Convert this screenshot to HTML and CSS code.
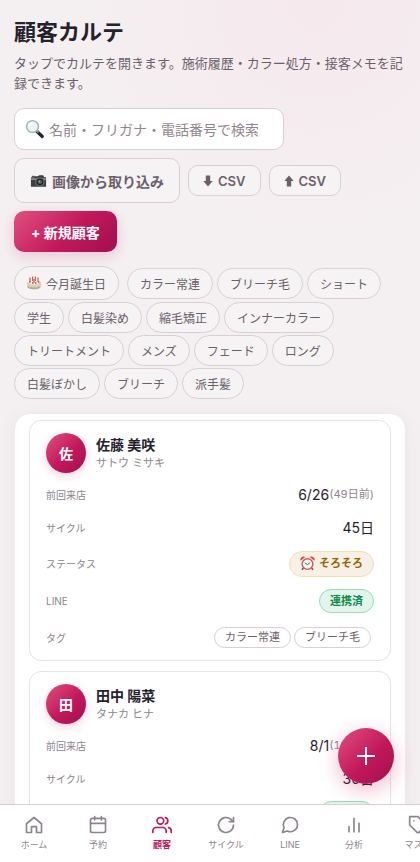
FILE: index.html
```html
<!DOCTYPE html>
<html lang="ja">
<head>
<meta charset="utf-8">
<meta name="viewport" content="width=device-width, initial-scale=1">
<title>顧客カルテ</title>
<link rel="stylesheet" href="styles.css">
</head>
<body>
<main class="page">
  <h1 class="title">顧客カルテ</h1>
  <p class="lead">タップでカルテを開きます。施術履歴・カラー処方・接客メモを記録できます。</p>

  <div class="toolbar">
    <label class="search">
      <svg class="search-icon" viewBox="0 0 20 20" aria-hidden="true">
        <path d="M12 12.500 17.300 17.500" stroke="#25252b" stroke-width="3.200" stroke-linecap="round"/>
        <path d="m11.500 11.500 2 2" stroke="#8b949c" stroke-width="2"/>
        <circle cx="7.500" cy="7.500" r="5.900" fill="#edf4f6" stroke="#a3adb4" stroke-width="1.400"/>
        <path d="M4 7a3.600 3.600 0 0 1 3-3" stroke="#fff" stroke-width="1.300" fill="none"/>
      </svg>
      <input class="search-input" type="text" aria-label="顧客検索" placeholder="名前・フリガナ・電話番号で検索">
    </label>
    <button class="btn btn-import" type="button">
      <svg class="camera" viewBox="0 0 18 14" aria-hidden="true">
        <path d="M1 3h3l1-1h3l2-1h4l1 2h2v10H1z" fill="#3c3e40"/>
        <path d="M1 4h16v2H1z" fill="#88898a"/>
        <path d="M2 1.500h3V3H2z" fill="#555"/>
        <circle cx="10.500" cy="8" r="4.300" fill="#222628" stroke="#7a7d7e"/>
        <circle cx="10.500" cy="8" r="2.200" fill="#4c6662"/>
        <circle cx="9.800" cy="7.200" r=".7" fill="#b4c8c4"/>
      </svg>
      <span>画像から取り込み</span>
    </button>
    <button class="btn btn-csv" type="button">
      <svg class="arrow" viewBox="0 0 10 12" aria-hidden="true"><path d="M2.800.5h4.400V6h2.500L5 11.500.3 6h2.500z" fill="currentColor"/></svg>
      <span>CSV</span>
    </button>
    <button class="btn btn-csv" type="button">
      <svg class="arrow" viewBox="0 0 10 12" aria-hidden="true"><path d="M2.800 11.500h4.400V6h2.500L5 .5.300 6h2.500z" fill="currentColor"/></svg>
      <span>CSV</span>
    </button>
    <button class="btn btn-primary" type="button">+ 新規顧客</button>
  </div>

  <div class="filters">
    <button class="chip chip-birthday" type="button">
      <svg class="cake" viewBox="0 0 14 14" aria-hidden="true">
        <path d="M.5 6v5c0 3 13 3 13 0V6z" fill="#b9a88c"/>
        <path d="M.5 5.500V9.500c1 2.500 12 2.500 13 0V5.500z" fill="#ddd0b8"/>
        <ellipse cx="7" cy="5.500" rx="6.500" ry="3" fill="#fbf3e4"/>
        <path d="M3 2v4M5.700 1v4M8.300 1v4M11 2v4M7 3v4" stroke="#b93b4c" stroke-width="1"/>
        <path d="M2 6h1.500M5 7h1.500M8 7h1.500M11 6h1.500" stroke="#d73d4e" stroke-width="1.500"/>
        <path d="M3 1v1M5.700 0v1M8.300 0v1M11 1v1" stroke="#eaa23b"/>
      </svg>
      <span>今月誕生日</span>
    </button>
    <button class="chip" type="button">カラー常連</button>
    <button class="chip" type="button">ブリーチ毛</button>
    <button class="chip" type="button">ショート</button>
    <button class="chip" type="button">学生</button>
    <button class="chip" type="button">白髪染め</button>
    <button class="chip" type="button">縮毛矯正</button>
    <button class="chip" type="button">インナーカラー</button>
    <button class="chip" type="button">トリートメント</button>
    <button class="chip" type="button">メンズ</button>
    <button class="chip" type="button">フェード</button>
    <button class="chip" type="button">ロング</button>
    <button class="chip" type="button">白髪ぼかし</button>
    <button class="chip" type="button">ブリーチ</button>
    <button class="chip" type="button">派手髪</button>
  </div>

  <section class="panel">
    <article class="card">
      <header class="person">
        <div class="avatar">佐</div>
        <div>
          <h2 class="name">佐藤 美咲</h2>
          <p class="kana">サトウ ミサキ</p>
        </div>
      </header>
      <dl class="facts">
        <div class="fact"><dt>前回来店</dt><dd>6/26<small>(49日前)</small></dd></div>
        <div class="fact"><dt>サイクル</dt><dd>45日</dd></div>
        <div class="fact"><dt>ステータス</dt><dd class="status"><span class="badge badge-soon">
          <svg class="clock" viewBox="0 0 14 14" aria-hidden="true">
            <path d="m3 11-1 2M11 11l1 2" stroke="#9a4a4a" stroke-width="1.500"/>
            <path d="M.5 4.500a3 3 0 0 1 4.500-3.500zM13.500 4.500A3 3 0 0 0 9 1z" fill="#e0434d"/>
            <circle cx="7" cy="7.500" r="5" fill="#faf8f5" stroke="#cc5962" stroke-width="1.300"/>
            <path d="m4.500 6.500 2.500 1.500L9.500 6" fill="none" stroke="#555" stroke-width=".9"/>
          </svg>そろそろ</span></dd></div>
        <div class="fact"><dt>LINE</dt><dd><span class="badge badge-linked">連携済</span></dd></div>
        <div class="fact"><dt>タグ</dt><dd class="tags"><span class="tag">カラー常連</span><span class="tag">ブリーチ毛</span></dd></div>
      </dl>
    </article>
    <article class="card">
      <header class="person">
        <div class="avatar">田</div>
        <div>
          <h2 class="name">田中 陽菜</h2>
          <p class="kana">タナカ ヒナ</p>
        </div>
      </header>
      <dl class="facts">
        <div class="fact"><dt>前回来店</dt><dd>8/1<small>(13日前)</small></dd></div>
        <div class="fact"><dt>サイクル</dt><dd>30日</dd></div>
        <div class="fact"><dt>LINE</dt><dd><span class="badge badge-linked">連携済</span></dd></div>
      </dl>
    </article>
  </section>
</main>

<button class="fab" type="button" aria-label="新規顧客を追加">
  <svg viewBox="0 0 20 20" aria-hidden="true"><path d="M10 1v18M1 10h18" stroke="currentColor" stroke-width="2"/></svg>
</button>

<nav class="tabs">
  <a class="tab" href="#home"><svg viewBox="0 0 24 24" aria-hidden="true"><path d="M3 10.500 12 3l9 7.500V21h-6v-7H9v7H3z"/></svg>ホーム</a>
  <a class="tab" href="#booking"><svg viewBox="0 0 24 24" aria-hidden="true"><rect x="3" y="4" width="18" height="17" rx="2"/><path d="M3 10h18M8 2v4M16 2v4"/></svg>予約</a>
  <a class="tab tab-active" href="#customers"><svg viewBox="0 0 24 24" aria-hidden="true"><path d="M17 21v-2a4 4 0 0 0-4-4H5a4 4 0 0 0-4 4v2"/><circle cx="10" cy="7" r="4"/><path d="M23 21v-2a4 4 0 0 0-3-3.870M16 3.130a4 4 0 0 1 0 7.750"/></svg>顧客</a>
  <a class="tab" href="#cycle"><svg viewBox="0 0 24 24" aria-hidden="true"><path d="M21 12a9 9 0 1 1-3-6.700L21 8"/><path d="M21 3v5h-5"/></svg>サイクル</a>
  <a class="tab" href="#line"><svg viewBox="0 0 24 24" aria-hidden="true"><path d="M21 11.500a8.500 8.500 0 0 1-12.300 7.600L3 21l1.900-5.700A8.500 8.500 0 1 1 21 11.500z"/></svg>LINE</a>
  <a class="tab" href="#analysis"><svg viewBox="0 0 24 24" aria-hidden="true"><path d="M18 20V10M12 20V4M6 20v-6"/></svg>分析</a>
  <a class="tab" href="#master"><svg viewBox="0 0 24 24" aria-hidden="true"><path d="m20.600 13.400-7.200 7.200a2 2 0 0 1-2.800 0L2 12V2h10l8.600 8.600a2 2 0 0 1 0 2.800z"/><path d="M7 7h.01"/></svg>マスタ</a>
</nav>
</body>
</html>
```
FILE: styles.css
```css
:root {
  --ink: #26222d;
  --text: #6b5f69;
  --muted: #8d858e;
  --line: #d8cfd5;
  --accent: #c2185b;
  --gradient: linear-gradient(135deg, #e0507f 0%, #c2185b 55%, #a01050 100%);
}

* { box-sizing: border-box; }

html { scrollbar-width: none; }

body {
  margin: 0;
  min-height: 100vh;
  color: var(--ink);
  font-family: Inter, "Noto Sans CJK JP", sans-serif;
  font-size: 14px;
  background: radial-gradient(circle at 75% 0, #f6e9ee 0, #f4f0f2 260px) #f4f0f2;
}

button, input { font: inherit; color: inherit; }
button { cursor: pointer; }
h1, h2, p, dl, dd { margin: 0; }

.page { padding: 16px 14px 80px; }

.title { font-size: 22px; line-height: 32px; font-weight: 700; }

.lead {
  margin-top: 5px;
  color: var(--text);
  font-size: 13px;
  line-height: 20px;
}

.toolbar {
  display: flex;
  flex-wrap: wrap;
  align-items: center;
  gap: 8px;
  margin-top: 15px;
}

.search {
  display: flex;
  align-items: center;
  gap: 4px;
  width: 270px;
  height: 42px;
  padding: 0 25px 0 10px;
  background: #fff;
  border: 1px solid var(--line);
  border-radius: 10px;
}

.search-icon { flex: none; width: 20px; height: 20px; fill: none; }

.search-input {
  flex: 1;
  min-width: 0;
  padding: 0;
  border: 0;
  outline: 0;
  background: none;
}

.search-input::placeholder { color: #91868f; opacity: 1; }

.btn {
  display: flex;
  align-items: center;
  justify-content: center;
  gap: 5px;
  border: 1px solid var(--line);
  border-radius: 10px;
  background: #f6f3f5;
  color: var(--text);
  font-size: 14px;
  font-weight: 700;
  white-space: nowrap;
}

.btn-import { height: 45px; padding: 0 15px; }
.btn-csv { height: 31px; padding: 0 14px; font-size: 13px; font-weight: 600; }
.btn-primary {
  height: 41px;
  padding: 0 17px;
  border: 0;
  background: var(--gradient);
  color: #fff;
  box-shadow: 0 4px 14px rgba(194, 24, 91, 0.2);
}

.camera { width: 17px; height: 14px; }
.arrow { width: 10px; height: 12px; }

.filters {
  display: flex;
  flex-wrap: wrap;
  align-items: center;
  gap: 2px 4px;
  margin-top: 14px;
}

.chip {
  display: flex;
  align-items: center;
  gap: 5px;
  height: 31px;
  padding: 0 12px;
  border: 1px solid var(--line);
  border-radius: 16px;
  background: #f6f3f5;
  color: var(--text);
  font-size: 12px;
  white-space: nowrap;
}

.chip-birthday { height: 34px; margin-right: 4px; border-radius: 17px; }
.cake { width: 14px; height: 14px; }

.panel {
  display: grid;
  gap: 10px;
  margin-top: 14px;
  padding: 6px 14px;
  background: #fff;
  border: 1px solid #f0e9ed;
  border-radius: 16px;
  box-shadow: 0 4px 20px rgba(70, 30, 50, 0.06);
}

.card {
  padding: 12px 16px 4px;
  border: 1px solid #e8e2e6;
  border-radius: 12px;
}

.person { display: flex; align-items: center; gap: 10px; margin-bottom: 5px; }

.avatar {
  display: grid;
  place-items: center;
  width: 40px;
  height: 40px;
  border-radius: 50%;
  background: var(--gradient);
  color: #fff;
  font-weight: 700;
  box-shadow: 0 3px 10px rgba(194, 24, 91, 0.2);
}

.name { font-size: 14px; line-height: 20px; font-weight: 700; }
.kana { color: var(--muted); font-size: 11px; line-height: 16px; }

.fact {
  display: flex;
  align-items: center;
  justify-content: space-between;
  padding: 6px 0;
}

.fact dt { color: var(--muted); font-size: 10px; }
.fact dd { display: flex; align-items: center; min-height: 21px; line-height: 21px; }
.fact small { color: var(--muted); font-size: 11px; font-variant-numeric: tabular-nums; }

.badge {
  display: flex;
  align-items: center;
  gap: 4px;
  height: 24px;
  padding: 0 10px;
  border: 1px solid;
  border-radius: 13px;
  font-size: 11px;
  font-weight: 700;
}

.fact .status { min-height: 27px; }
.badge-soon { height: 26px; color: #956300; background: #f6f0e5; border-color: #f4dfb0; }
.badge-linked { color: #0b8a4b; background: #e3f4eb; border-color: #92dfb7; }
.clock { width: 15px; height: 15px; }

.fact .tags { min-height: 25px; gap: 3px; padding-right: 3px; }

.tag {
  height: 21px;
  padding: 0 10px;
  border: 1px solid var(--line);
  border-radius: 11px;
  color: var(--text);
  font-size: 11px;
  line-height: 19px;
}

.fab {
  position: fixed;
  right: 26px;
  bottom: 78px;
  display: grid;
  place-items: center;
  width: 56px;
  height: 56px;
  padding: 0;
  border: 0;
  border-radius: 50%;
  background: var(--gradient);
  color: #fff;
  box-shadow: 0 6px 20px rgba(194, 24, 91, 0.3);
}

.fab svg { width: 20px; height: 20px; }

.tabs {
  position: fixed;
  right: 0;
  bottom: 0;
  left: 0;
  display: flex;
  height: 58px;
  padding: 0 2px;
  overflow-x: auto;
  scrollbar-width: none;
  background: #fff;
  border-top: 1px solid var(--line);
}

.tab {
  display: flex;
  flex: 0 0 64px;
  flex-direction: column;
  align-items: center;
  gap: 3px;
  padding-top: 10px;
  color: var(--muted);
  font-size: 9px;
  line-height: 14px;
  text-decoration: none;
}

.tab svg {
  width: 20px;
  height: 20px;
  fill: none;
  stroke: currentColor;
  stroke-width: 2;
  stroke-linecap: round;
  stroke-linejoin: round;
}

.tab-active { color: var(--accent); font-weight: 600; }
```
